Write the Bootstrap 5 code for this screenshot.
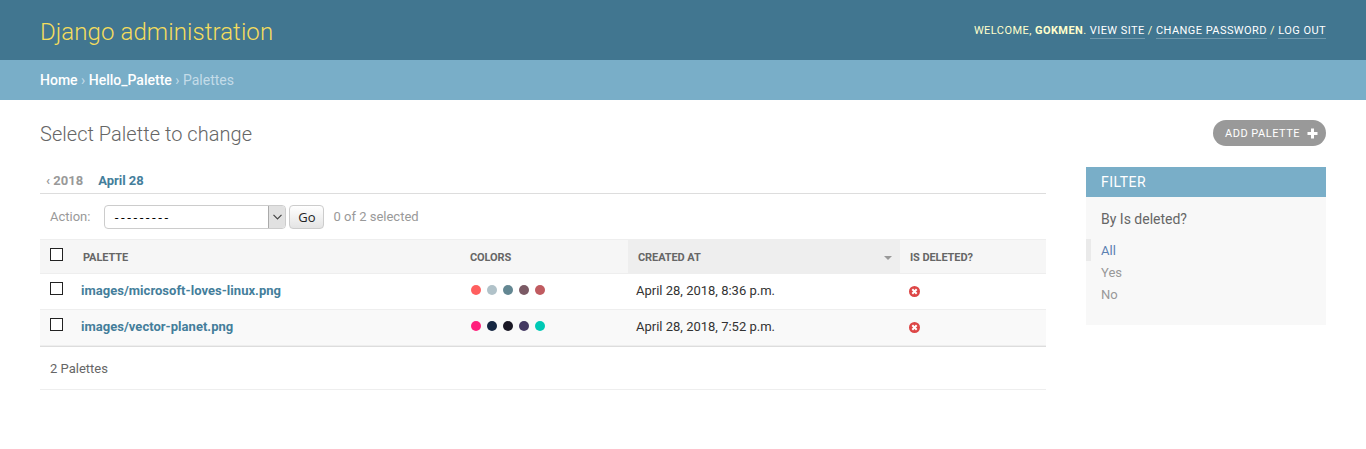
<!DOCTYPE html>
<html lang="en">
<head>
<meta charset="utf-8">
<meta name="viewport" content="width=device-width, initial-scale=1">
<title>Select Palette to change | Django site admin</title>
<link rel="stylesheet" href="https://cdn.jsdelivr.net/npm/bootstrap@5.3.0/dist/css/bootstrap.min.css">
<script src="https://cdn.jsdelivr.net/npm/bootstrap@5.3.0/dist/js/bootstrap.bundle.min.js"></script>
<style>
body{font-family:Roboto,"Liberation Sans",sans-serif;font-size:13px;line-height:20px;color:#333;background:#fff}
a{color:#447e9b;text-decoration:none}
h1,h2,h3{margin:0}
.site-header{height:60px;background:#417690;color:#ffc;padding:0 40px}
.site-title{font-size:24px;font-weight:300;line-height:30px;color:#f5dd5d;padding-top:4px;letter-spacing:.08px}
.user-tools{font-size:11px;letter-spacing:.44px;text-transform:uppercase;font-weight:400;padding-top:2px;white-space:pre}
.user-tools a{color:#fff;display:inline-block;line-height:15px;border-bottom:1px solid rgba(255,255,255,.25)}
.crumbs{height:40px;background:#79aec8;color:#c4dce8;padding:0 40px;font-size:14px}
.crumbs a{color:#fff;font-weight:500}
.page{padding:20px 40px 0}
.page-title{font-size:20px;font-weight:300;line-height:28px;color:#666;letter-spacing:.03px}
.add-link{width:113px;height:26px;border-radius:15px;background:#999;color:#fff;font-size:11px;letter-spacing:.5px;padding:0 8px 0 12px;line-height:26px}
.add-link span{padding-top:1px}
.body-row{gap:40px;margin-top:19px}
.dates{height:27px;border-bottom:1px solid #ddd;padding-left:6px;gap:15px;font-weight:700;line-height:27px}
.dates .back{color:#999}
.actions-bar{height:45px;padding:1px 10px 0;color:#999}
.act-select{width:182px;height:24px;border:1px solid #ccc;border-radius:4px;background:#fff;color:#000;margin:0 3px 0 14px;overflow:hidden;line-height:22px}
.act-select .val{padding-left:9px;font-family:"Open Sans",sans-serif;letter-spacing:2.05px}
.act-select .arrow{width:18px;height:24px;margin:-1px -1px 0 0;border:1px solid #aaa;background:#e1e1e1;border-radius:0 2px 2px 0}
.go{width:35px;height:24px;border:1px solid #ccc;border-radius:4px;background:linear-gradient(#fff,#e4e4e4);color:#222;font:13px "Open Sans",sans-serif;padding:0;margin-right:9px}
.results{table-layout:fixed;width:100%;border-collapse:separate;border-spacing:0}
.results th,.results td{vertical-align:top;padding:0}
.results thead th{background:#f6f6f6;border-top:1px solid #eee;border-bottom:1px solid #eee;font-size:11px;line-height:30px;font-weight:700;letter-spacing:-.1px;color:#666;text-transform:uppercase;padding:3px 0 0 10px}
.results thead th.sorted{background:#eee}
.results tbody td{height:36px;line-height:33px;border-bottom:1px solid #eee;padding-left:8px}
.results tbody td:first-child{padding-left:10px}
.results tbody tr:nth-child(2) td{background:#f9f9f9}
.results tbody a{font-weight:700;letter-spacing:.03px}
.tick{appearance:none;display:block;width:13px;height:13px;border:1px solid #222;background:#fff;margin:8px 0 0;border-radius:0}
thead .tick{margin-top:5px}
.dots{gap:6px;padding:11px 0 0 3px}
.dots i{width:10px;height:10px;border-radius:50%}
.no-icon{display:block;margin:12px 0 0 1px}
.paginator{height:44px;border-top:1px solid #ddd;border-bottom:1px solid #eee;padding-left:10px;line-height:44px;color:#666}
.filter-box{width:240px;height:158px;background:#f8f8f8}
.filter-box h2{height:30px;line-height:30px;background:#79aec8;color:#fff;font-size:14px;font-weight:400;letter-spacing:.5px;padding-left:15px}
.filter-box h3{font-size:14px;font-weight:400;line-height:20px;color:#666;padding:12px 15px 10px}
.filter-box li{line-height:24px;height:22px;padding-left:10px;border-left:5px solid transparent}
.filter-box li a{color:#999}
.filter-box li.sel{border-color:#eaeaea}
.filter-box li.sel a{color:#5b80b2}
</style>
</head>
<body>
<header class="site-header d-flex justify-content-between align-items-center">
  <h1 class="site-title">Django administration</h1>
  <div class="user-tools">Welcome, <strong>Gokmen</strong>. <a href="#">View site</a> / <a href="#">Change password</a> / <a href="#">Log out</a></div>
</header>
<nav class="crumbs d-flex align-items-center"><div><a href="#">Home</a> › <a href="#">Hello_Palette</a> › Palettes</div></nav>
<main class="page">
  <div class="d-flex justify-content-between">
    <h1 class="page-title">Select Palette to change</h1>
    <a href="#" class="add-link d-flex align-items-center justify-content-between"><span>ADD PALETTE</span>
      <svg width="11" height="11" viewBox="0 0 11 11"><path d="M4 .5h3V4h3.5v3H7v3.5H4V7H.5V4H4z" fill="#fff"/></svg></a>
  </div>
  <div class="d-flex align-items-start body-row">
    <section class="flex-grow-1">
      <div class="dates d-flex"><a href="#" class="back">‹ 2018</a><a href="#">April 28</a></div>
      <div class="actions-bar d-flex align-items-center">
        <span>Action:</span>
        <div class="act-select d-flex justify-content-between"><span class="val">---------</span>
          <span class="arrow d-flex align-items-center justify-content-center"><svg width="9" height="6" viewBox="0 0 9 6"><path d="M.5.8l4 4 4-4" fill="none" stroke="#444" stroke-width="1.2"/></svg></span></div>
        <button class="go" type="button">Go</button>
        <span>0 of 2 selected</span>
      </div>
      <table class="results">
        <colgroup><col width="33"><col width="387"><col width="168"><col width="272"><col width="146"></colgroup>
        <thead><tr>
          <th><input type="checkbox" class="tick"></th><th>Palette</th><th>Colors</th>
          <th class="sorted"><div class="d-flex justify-content-between align-items-center">Created at<svg width="8" height="4" viewBox="0 0 8 4" class="me-2"><path d="M0 0h8L4 4z" fill="#999"/></svg></div></th>
          <th>Is deleted?</th>
        </tr></thead>
        <tbody>
          <tr>
            <td><input type="checkbox" class="tick"></td><td><a href="#">images/microsoft-loves-linux.png</a></td>
            <td><div class="dots d-flex"><i style="background:#ff5f5f"></i><i style="background:#b1c2c9"></i><i style="background:#638792"></i><i style="background:#7b5a65"></i><i style="background:#c05b60"></i></div></td>
            <td>April 28, 2018, 8:36 p.m.</td>
            <td><svg class="no-icon" width="11" height="11" viewBox="0 0 11 11"><circle cx="5.5" cy="5.5" r="5.5" fill="#dd4646"/><path d="M3.3 3.3l4.4 4.4M7.7 3.3L3.3 7.7" stroke="#fff" stroke-width="2"/></svg></td>
          </tr>
          <tr>
            <td><input type="checkbox" class="tick"></td><td><a href="#">images/vector-planet.png</a></td>
            <td><div class="dots d-flex"><i style="background:#ff1f7c"></i><i style="background:#152642"></i><i style="background:#191724"></i><i style="background:#443962"></i><i style="background:#00c9b5"></i></div></td>
            <td>April 28, 2018, 7:52 p.m.</td>
            <td><svg class="no-icon" width="11" height="11" viewBox="0 0 11 11"><circle cx="5.5" cy="5.5" r="5.5" fill="#dd4646"/><path d="M3.3 3.3l4.4 4.4M7.7 3.3L3.3 7.7" stroke="#fff" stroke-width="2"/></svg></td>
          </tr>
        </tbody>
      </table>
      <div class="paginator">2 Palettes</div>
    </section>
    <aside class="filter-box flex-shrink-0">
      <h2>FILTER</h2>
      <h3>By Is deleted?</h3>
      <ul class="list-unstyled m-0"><li class="sel"><a href="#">All</a></li><li><a href="#">Yes</a></li><li><a href="#">No</a></li></ul>
    </aside>
  </div>
</main>
</body>
</html>
